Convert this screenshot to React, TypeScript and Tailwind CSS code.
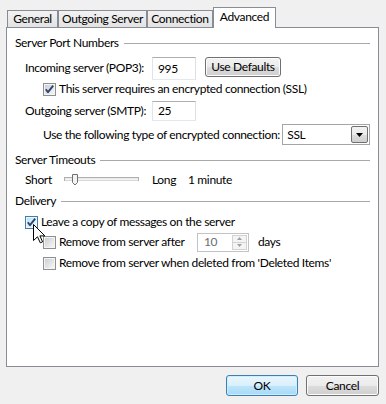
import React from "react";

function Check({ checked = false, hot = false }: { checked?: boolean; hot?: boolean }) {
  return (
    <svg width="13" height="13" viewBox="0 0 13 13" className="shrink-0">
      <defs>
        <linearGradient id={hot ? "cbh" : "cbn"} x1="0" y1="0" x2="1" y2="1">
          <stop offset="0" stopColor={hot ? "#b9e4fc" : "#cbcfd5"} />
          <stop offset="1" stopColor={hot ? "#f2fafe" : "#f6f6f6"} />
        </linearGradient>
      </defs>
      <rect x="0.5" y="0.5" width="12" height="12" fill="#f4f4f4" stroke={hot ? "#3c7fb1" : "#8e8f8f"} />
      <rect x="2" y="2" width="9" height="9" fill={`url(#${hot ? "cbh" : "cbn"})`} />
      {checked && (
        <path d="M2.8 6.2 L5 9.2 L10.2 2.6" stroke="#31446e" strokeWidth="1.9" fill="none" strokeLinejoin="round" />
      )}
    </svg>
  );
}

function GroupHeader({ title, className = "" }: { title: string; className?: string }) {
  return (
    <div className={`flex items-center h-[18px] ${className}`}>
      <span className="whitespace-nowrap">{title}</span>
      <div className="flex-1 h-px bg-[#a9a9a9] ml-[5px]" />
    </div>
  );
}

function TextBox({ value, className = "" }: { value: string; className?: string }) {
  return (
    <div
      className={`flex items-center bg-white border border-[#abadb3] border-l-[#e2e3ea] border-r-[#dbdfe6] border-b-[#e3e9ef] pl-[5px] ${className}`}
    >
      {value}
    </div>
  );
}

function Button({ label, def = false, className = "" }: { label: string; def?: boolean; className?: string }) {
  return (
    <div
      className={`flex items-center justify-center rounded-[3px] border ${
        def
          ? "border-[#3c7fb1] bg-[linear-gradient(#eaf6fd_0%,#d9f0fc_50%,#bee6fd_50%,#a7d9f5_100%)] shadow-[inset_0_0_0_1px_#cdeefe]"
          : "border-[#707070] bg-[linear-gradient(#f2f2f2_0%,#ebebeb_50%,#dddddd_50%,#cfcfcf_100%)] shadow-[inset_0_0_0_1px_#fcfcfc]"
      } ${className}`}
    >
      {label}
    </div>
  );
}

function Tab({ label, active = false, className = "" }: { label: string; active?: boolean; className?: string }) {
  return (
    <div
      className={`flex justify-center border border-[#898c95] ${
        active
          ? "bg-white border-b-0 h-[21px] items-start pt-[3px] relative z-10 -mb-px"
          : "h-[17px] items-center bg-[linear-gradient(#f2f2f2,#e3e3e3)] border-b-0"
      } ${className}`}
    >
      {label}
    </div>
  );
}

export default function App() {
  return (
    <div className="relative w-[386px] h-[404px] bg-[#f0f0f0] text-[12px] tracking-[-0.35px] text-black font-['Lato',sans-serif] leading-none whitespace-nowrap overflow-hidden">
      {/* tabs */}
      <div className="flex items-end h-[20px] mt-[7px] pl-[7px]">
        <Tab label="General" className="w-[51px]" />
        <Tab label="Outgoing Server" className="w-[89px]" />
        <Tab label="Connection" className="w-[66px]" />
        <Tab label="Advanced" active className="w-[63px]" />
      </div>

      {/* panel */}
      <div className="ml-[6px] w-[373px] h-[340px] border border-[#898c95] bg-white px-[8px] flex flex-col">
        <GroupHeader title="Server Port Numbers" className="mt-[6px]" />

        <div className="flex items-start h-[23px] mt-[5px] pl-[10px]">
          <div className="w-[127px] h-[22px] flex items-center">Incoming server (POP3):</div>
          <TextBox value="995" className="w-[44px] h-[23px]" />
          <Button label="Use Defaults" className="ml-[9px] w-[76px] h-[20px]" />
        </div>

        <div className="flex items-center h-[18px] pl-[28px]">
          <Check checked />
          <span className="ml-[3px]">This server requires an encrypted connection (SSL)</span>
        </div>

        <div className="flex items-center h-[20px] mt-[3px] pl-[10px]">
          <div className="w-[127px]">Outgoing server (SMTP):</div>
          <TextBox value="25" className="w-[44px] h-[20px]" />
        </div>

        <div className="flex items-center h-[21px] mt-[3px] pl-[28px]">
          <div className="w-[240px]">Use the following type of encrypted connection:</div>
          <div className="relative w-[88px] h-[21px] border border-[#a5a5a5] bg-white flex items-center pl-[4px]">
            SSL
            <div className="absolute right-[1px] top-[1px] w-[17px] h-[17px] border border-[#707070] rounded-[2px] bg-[linear-gradient(#f2f2f2_0%,#ebebeb_50%,#dddddd_50%,#cfcfcf_100%)] flex items-center justify-center">
              <svg width="7" height="4" viewBox="0 0 7 4">
                <path d="M0 0 H7 L3.5 4 Z" fill="#000" />
              </svg>
            </div>
          </div>
        </div>

        <GroupHeader title="Server Timeouts" className="mt-[6px]" />

        <div className="flex items-center h-[18px] mt-[2px] pl-[10px]">
          <div className="w-[39px]">Short</div>
          <svg width="75" height="12" viewBox="0 0 75 12" className="shrink-0">
            <rect x="0.5" y="3.5" width="74" height="3" fill="#e7eaea" stroke="#b0b0b0" />
            <line x1="1" y1="6" x2="74" y2="6" stroke="#ffffff" />
            <path d="M8.5 0.5 H13.5 V8.5 L11 11 L8.5 8.5 Z" fill="#f3f3f3" stroke="#707070" />
          </svg>
          <div className="ml-[13px] w-[36px]">Long</div>
          <div>1 minute</div>
        </div>

        <GroupHeader title="Delivery" className="mt-[3px]" />

        <div className="flex items-center h-[16px] mt-[4px] pl-[10px]">
          <Check checked hot />
          <span className="ml-[3px]">Leave a copy of messages on the server</span>
        </div>

        <div className="flex items-center h-[20px] mt-[2px] pl-[28px]">
          <Check />
          <span className="ml-[3px] w-[138px]">Remove from server after</span>
          <div className="relative w-[52px] h-[19px] border border-[#c0c4c8] bg-white flex items-center pl-[6px] text-[#6d6d6d]">
            10
            <div className="absolute right-[1px] top-[1px] w-[15px] h-[15px] flex flex-col">
              <div className="flex-1 border border-[#d2d2d2] bg-[#f4f4f4] flex items-center justify-center">
                <svg width="5" height="3" viewBox="0 0 5 3">
                  <path d="M0 3 L2.5 0 L5 3 Z" fill="#a0a0a0" />
                </svg>
              </div>
              <div className="flex-1 border border-t-0 border-[#d2d2d2] bg-[#f4f4f4] flex items-center justify-center">
                <svg width="5" height="3" viewBox="0 0 5 3">
                  <path d="M0 0 L2.5 3 L5 0 Z" fill="#a0a0a0" />
                </svg>
              </div>
            </div>
          </div>
          <span className="ml-[9px]">days</span>
        </div>

        <div className="flex items-center h-[16px] mt-[3px] pl-[28px]">
          <Check />
          <span className="ml-[3px]">Remove from server when deleted from 'Deleted Items'</span>
        </div>
      </div>

      {/* buttons */}
      <div className="flex justify-end gap-[8px] pr-[7px] mt-[8px]">
        <Button label="OK" def className="w-[72px] h-[21px]" />
        <Button label="Cancel" className="w-[73px] h-[21px]" />
      </div>

      {/* mouse cursor */}
      <svg width="13" height="20" viewBox="0 0 13 20" className="absolute left-[33px] top-[224px]">
        <path d="M0.5 0.5 L0.5 16.5 L4.5 12.8 L7.3 18.8 L9.6 17.8 L6.9 11.9 L11.9 11.9 Z" fill="#fff" stroke="#000" strokeLinejoin="round" />
      </svg>
    </div>
  );
}
